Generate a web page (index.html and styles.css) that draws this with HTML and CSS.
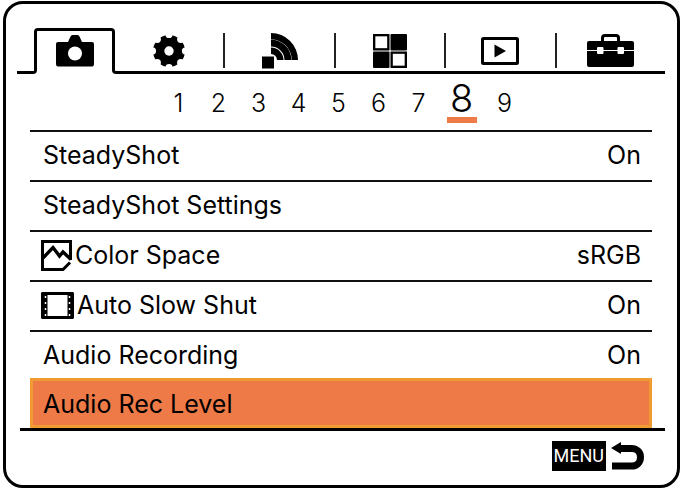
FILE: index.html
```html
<!DOCTYPE html>
<html lang="en">
<head>
  <meta charset="UTF-8" />
  <meta name="viewport" content="width=device-width, initial-scale=1" />
  <title>Camera Menu</title>
  <link rel="stylesheet" href="styles.css">
</head>
<body>

  <main class="screen">

    <nav class="tabs" aria-label="Menu groups">
      <button class="tab active" aria-label="Camera settings 1">
        <svg width="38" height="32" viewBox="0 0 38 32">
          <path d="M2 7H12L14.500 1.500Q15 0 16.500 0H21.500Q23 0 23.500 1.500L26 7H36Q38 7 38 9V29Q38 31.500 36 31.500H2Q0 31.500 0 29V9Q0 7 2 7Z" />
          <circle class="hole" cx="19" cy="18.500" r="7" />
        </svg>
      </button>
      <div class="tabs-rest">
        <button class="tab" aria-label="Camera settings 2">
          <svg width="32" height="32" viewBox="-16 -16 32 32">
            <circle r="16" />
            <circle class="hole" r="4.700" />
            <g class="hole">
              <circle cx="0" cy="-16.500" r="3.600" />
              <circle cx="11.700" cy="-11.700" r="3.600" />
              <circle cx="16.500" cy="0" r="3.600" />
              <circle cx="11.700" cy="11.700" r="3.600" />
              <circle cx="0" cy="16.500" r="3.600" />
              <circle cx="-11.700" cy="11.700" r="3.600" />
              <circle cx="-16.500" cy="0" r="3.600" />
              <circle cx="-11.700" cy="-11.700" r="3.600" />
            </g>
          </svg>
        </button>
        <button class="tab" aria-label="Network">
          <svg width="36" height="36" viewBox="0 0 36 36">
            <path d="M0 23.500H12V35.500H0Z" />
            <path d="M9 0A27 27 0 0 1 36 27H29.700A20.700 20.700 0 0 0 9 6.300Z" />
            <path d="M9 6.600A20.400 20.400 0 0 1 29.400 27H22.500A13.500 13.500 0 0 0 9 13.500Z" />
            <path d="M9 14.500A12.500 12.500 0 0 1 21.500 27H15A6 6 0 0 0 9 21Z" />
          </svg>
        </button>
        <button class="tab" aria-label="Applications">
          <svg width="34" height="34" viewBox="0 0 35 35">
            <rect x="18" y="0" width="17" height="17" rx="1" />
            <rect x="0" y="18" width="17" height="17" rx="1" />
            <rect class="line" x="1.200" y="1.200" width="14.600" height="14.600" stroke-width="2.400" />
            <rect class="line" x="19.200" y="19.200" width="14.600" height="14.600" stroke-width="2.400" />
          </svg>
        </button>
        <button class="tab" aria-label="Playback">
          <svg width="38" height="28" viewBox="0 0 38 28">
            <rect class="line" x="1.500" y="1.500" width="35" height="25" rx="1" stroke-width="3" />
            <path d="M13.500 7.500L25 14L13.500 20.500Z" />
          </svg>
        </button>
        <button class="tab" aria-label="Setup">
          <svg width="47" height="33" viewBox="0 0 47 33">
            <path class="line" d="M15.500 8V4Q15.500 1.500 18 1.500H29Q31.500 1.500 31.500 4V8" stroke-width="3" />
            <rect x="0" y="7" width="47" height="26" rx="2" />
            <path class="hole" d="M0 16H47V17H0Z" />
            <rect class="hole" x="10" y="13" width="6.500" height="7" rx="1" />
            <rect class="hole" x="30.500" y="13" width="6.500" height="7" rx="1" />
          </svg>
        </button>
      </div>
    </nav>

    <nav class="pages" aria-label="Pages">
      <button>1</button>
      <button>2</button>
      <button>3</button>
      <button>4</button>
      <button>5</button>
      <button>6</button>
      <button>7</button>
      <button class="current" aria-current="page">8</button>
      <button>9</button>
    </nav>

    <div class="settings">
      <button class="row"><span>SteadyShot</span><span>On</span></button>
      <button class="row"><span>SteadyShot Settings</span></button>
      <button class="row with-icon">
        <svg width="31" height="31" viewBox="0 0 31 31">
          <path class="line" d="M29.500 20V1.500H1.500V29.500H22L29 22.500" stroke-width="3" />
          <path class="line" d="M1.500 18.500L12 7.500L18.500 16L22 12L30 19.500" stroke-width="3.400" />
        </svg>
        <span>Color Space</span><span>sRGB</span>
      </button>
      <button class="row with-icon">
        <svg width="33" height="27" viewBox="0 0 33 27">
          <path fill-rule="evenodd" d="M1 0H32L33 1V26L32 27H1L0 26V1ZM6.500 3V24H26.500V3Z" />
          <path class="holes" d="M4.500 4V25M28.500 4V25" />
        </svg>
        <span>Auto Slow Shut</span><span>On</span>
      </button>
      <button class="row"><span>Audio Recording</span><span>On</span></button>
      <button class="row selected"><span>Audio Rec Level</span></button>
    </div>

    <footer class="bottom-bar">
      <button class="back" aria-label="MENU back">
        <span class="menu-key">MENU</span>
        <svg width="34" height="28" viewBox="0 0 34 28">
          <path class="line" d="M8 6.500H20.500C32.500 6.500 32.500 24 20.500 24H1" stroke-width="7" />
          <path d="M0 6L10 0V12Z" />
        </svg>
      </button>
    </footer>

  </main>

</body>
</html>
```
FILE: styles.css
```css
body {
  margin: 0;
  background: #fff;
  color: #000;
  font-family: Inter, "Liberation Sans", sans-serif;
  font-size: 25px;
}

button {
  background: transparent;
  border: 0;
  padding: 0;
  margin: 0;
  color: inherit;
  font: inherit;
  cursor: pointer;
}

svg {
  display: block;
  flex-shrink: 0;
}

.hole {
  fill: #fff;
}

.line {
  fill: none;
  stroke: #000;
}

.holes {
  fill: none;
  stroke: #fff;
  stroke-width: 1.5;
  stroke-dasharray: 2 4;
}

.screen {
  margin: 1px 3px 3px;
  border: 3px solid #000;
  border-radius: 20px;
}

/* Tab strip, the outline runs around the active tab */
.tabs {
  display: flex;
  align-items: flex-end;
  margin: 24px 12px 0 11px;
}

.tabs::before {
  content: "";
  box-sizing: border-box;
  width: 20px;
  height: 8px;
  margin-right: -3px;
  border: solid #000;
  border-width: 0 3px 3px 0;
  border-bottom-right-radius: 4px;
}

.tab {
  display: flex;
  align-items: center;
  justify-content: center;
}

.tab.active {
  box-sizing: border-box;
  width: 81px;
  height: 42px;
  margin-bottom: 4px;
  border: solid #000;
  border-width: 3px 3px 0;
  border-radius: 4px 4px 0 0;
}

.tabs-rest {
  display: flex;
  flex: 1;
  height: 35px;
  margin-left: -3px;
  padding-bottom: 3px;
  border: solid #000;
  border-width: 0 0 3px 3px;
  border-bottom-left-radius: 4px;
}

.tabs-rest .tab {
  flex: 1;
}

.tabs-rest .tab + .tab {
  border-left: 2px solid #222;
}

/* Page numbers */
.pages {
  display: flex;
  justify-content: center;
  align-items: baseline;
  padding: 5px 0 7px;
}

.pages button {
  width: 40px;
  font-weight: 300;
}

.pages .current {
  width: 30px;
  margin: 0 8px;
  border-bottom: 6px solid #ee7a47;
  font-size: 38px;
  line-height: 38px;
}

/* Settings list */
.settings {
  margin: 0 25px 0 24px;
}

.row {
  box-sizing: border-box;
  display: flex;
  align-items: center;
  width: 100%;
  height: 50px;
  padding: 0 11px 2px 13px;
  border-top: 2px solid #111;
}

.row span + span {
  margin-left: auto;
}

.row.with-icon {
  gap: 3px;
  padding-left: 11px;
}

.row.selected {
  margin-top: -2px;
  padding: 2px 10px 0;
  border: 3px solid #f09a32;
  background: #ee7a47;
}

.bottom-bar {
  display: flex;
  justify-content: flex-end;
  margin: 0 12px 0 14px;
  padding: 10px 20px 14px;
  border-top: 3px solid #000;
}

.back {
  display: flex;
  align-items: center;
  gap: 5px;
}

.menu-key {
  padding: 0 2px;
  background: #000;
  color: #fff;
  font-family: Roboto, "Liberation Sans", sans-serif;
  font-size: 18px;
  line-height: 30px;
}
```
